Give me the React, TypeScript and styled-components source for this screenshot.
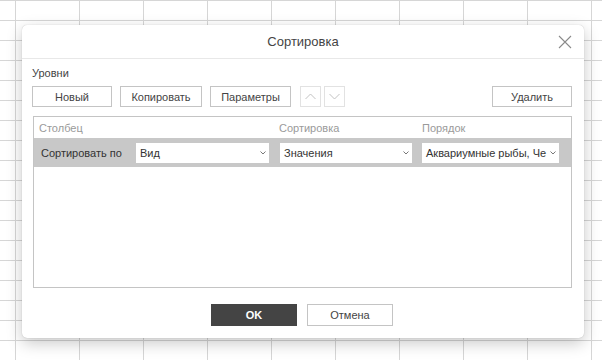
import { createGlobalStyle } from "styled-components";
import styled from "styled-components";

const GlobalStyle = createGlobalStyle`
  html, body {
    margin: 0;
    padding: 0;
  }
  body {
    font-family: "Liberation Sans", Arial, sans-serif;
    color: #444;
  }
`;

const Sheet = styled.div`
  position: relative;
  width: 602px;
  height: 360px;
  overflow: hidden;
  background-color: #fff;
  background-image: linear-gradient(to right, #d6d6d6 1px, transparent 1px),
    linear-gradient(to bottom, #d6d6d6 1px, transparent 1px);
  background-size: 64px 20px, 64px 20px;
  background-position: 15px 0, 0 0;
`;

const Dialog = styled.div`
  position: absolute;
  left: 22px;
  top: 25px;
  width: 562px;
  height: 313px;
  box-sizing: border-box;
  background: #fff;
  border-radius: 5px;
  box-shadow: 0 5px 16px rgba(0, 0, 0, 0.22), 0 0 1px rgba(0, 0, 0, 0.25);
  display: flex;
  flex-direction: column;
`;

const Header = styled.div`
  position: relative;
  height: 33px;
  border-bottom: 1px solid #e8e8e8;
  display: flex;
  align-items: center;
  justify-content: center;
  font-size: 13px;
  color: #444;
`;

const Close = styled.button`
  position: absolute;
  right: 12px;
  top: 10px;
  width: 14px;
  height: 14px;
  padding: 0;
  border: none;
  background: none;
  cursor: pointer;
  display: flex;
`;

const Body = styled.div`
  flex: 1;
  padding: 7px 12px 0 10px;
  display: flex;
  flex-direction: column;
`;

const Label = styled.div`
  font-size: 11px;
  line-height: 14px;
  height: 14px;
  color: #444;
`;

const Toolbar = styled.div`
  display: flex;
  align-items: center;
  margin-top: 6px;
  height: 21px;
`;

const Button = styled.button<{ w: number; gap?: number }>`
  width: ${({ w }) => w}px;
  height: 21px;
  margin-right: ${({ gap }) => gap ?? 0}px;
  box-sizing: border-box;
  border: 1px solid #c4c4c4;
  background: #fff;
  font-family: "Liberation Sans", Arial, sans-serif;
  font-size: 11px;
  color: #444;
  padding: 0;
  cursor: pointer;
`;

const ArrowButton = styled.button<{ gap?: number }>`
  width: 21px;
  height: 21px;
  margin-right: ${({ gap }) => gap ?? 0}px;
  box-sizing: border-box;
  border: 1px solid #e2e2e2;
  background: #fff;
  padding: 0;
  display: flex;
  align-items: center;
  justify-content: center;
`;

const Spacer = styled.div`
  flex: 1;
`;

const Table = styled.div`
  margin-top: 9px;
  margin-left: 1px;
  height: 172px;
  box-sizing: border-box;
  border: 1px solid #c4c4c4;
  display: flex;
  flex-direction: column;
`;

const HeadRow = styled.div`
  display: flex;
  height: 21px;
  align-items: center;
  padding-left: 5px;
  font-size: 11px;
  color: #9a9a9a;
`;

const HeadCell = styled.div<{ w?: number }>`
  width: ${({ w }) => (w ? `${w}px` : "auto")};
  flex-shrink: 0;
`;

const LevelRow = styled.div`
  display: flex;
  height: 29px;
  align-items: center;
  padding-left: 5px;
  background: #c8c8c8;
  font-size: 11px;
  color: #333;
`;

const RowLabel = styled.div`
  width: 95px;
  padding-left: 2px;
  flex-shrink: 0;
  font-size: 11px;
`;

const Select = styled.div<{ w: number; shift?: number }>`
  width: ${({ w }) => w}px;
  margin-left: ${({ shift }) => shift ?? 0}px;
  flex-shrink: 0;
  height: 20px;
  background: #fff;
  display: flex;
  align-items: center;
  padding: 0 3px 0 4px;
  box-sizing: border-box;
  overflow: hidden;
`;

const SelectText = styled.span`
  flex: 1;
  min-width: 0;
  white-space: nowrap;
  font-size: 11px;
  color: #333;
`;

const Caret = styled.svg`
  flex-shrink: 0;
  margin-left: 1px;
`;

const Footer = styled.div`
  display: flex;
  justify-content: center;
  gap: 10px;
  padding-top: 16px;
`;

const FooterButton = styled.button<{ primary?: boolean }>`
  width: 86px;
  height: 22px;
  box-sizing: border-box;
  border: 1px solid ${({ primary }) => (primary ? "#444" : "#c4c4c4")};
  background: ${({ primary }) => (primary ? "#444" : "#fff")};
  color: ${({ primary }) => (primary ? "#fff" : "#444")};
  font-family: "Liberation Sans", Arial, sans-serif;
  font-size: 11px;
  font-weight: ${({ primary }) => (primary ? 700 : 400)};
  padding: 0;
`;

function Chevron({ up }: { up?: boolean }) {
  return (
    <svg width="11" height="7" viewBox="0 0 11 7">
      <path
        d={up ? "M0.5 6 L5.5 1 L10.5 6" : "M0.5 1 L5.5 6 L10.5 1"}
        fill="none"
        stroke="#c2c2c2"
        strokeWidth="1"
      />
    </svg>
  );
}

function Dropdown({ value, w, shift }: { value: string; w: number; shift?: number }) {
  return (
    <Select w={w} shift={shift}>
      <SelectText>{value}</SelectText>
      <Caret width="6" height="4" viewBox="0 0 6 4">
        <path d="M0.5 0.5 L3 3 L5.5 0.5" fill="none" stroke="#777" strokeWidth="1" />
      </Caret>
    </Select>
  );
}

export default function App() {
  return (
    <>
      <GlobalStyle />
      <Sheet>
        <Dialog>
          <Header>
            Сортировка
            <Close aria-label="Закрыть">
              <svg width="14" height="14" viewBox="0 0 14 14">
                <path d="M1 1 L13 13 M13 1 L1 13" stroke="#8a8a8a" strokeWidth="1.1" />
              </svg>
            </Close>
          </Header>
          <Body>
            <Label>Уровни</Label>
            <Toolbar>
              <Button w={80} gap={8}>Новый</Button>
              <Button w={82} gap={8}>Копировать</Button>
              <Button w={81} gap={9}>Параметры</Button>
              <ArrowButton gap={3}>
                <Chevron up />
              </ArrowButton>
              <ArrowButton>
                <Chevron />
              </ArrowButton>
              <Spacer />
              <Button w={80}>Удалить</Button>
            </Toolbar>
            <Table>
              <HeadRow>
                <HeadCell w={240}>Столбец</HeadCell>
                <HeadCell w={143}>Сортировка</HeadCell>
                <HeadCell>Порядок</HeadCell>
              </HeadRow>
              <LevelRow>
                <RowLabel>Сортировать по</RowLabel>
                <Dropdown value="Вид" w={133} />
                <Dropdown value="Значения" w={132} shift={11} />
                <Dropdown value="Аквариумные рыбы, Че" w={137} shift={10} />
              </LevelRow>
            </Table>
            <Footer>
              <FooterButton primary>OK</FooterButton>
              <FooterButton>Отмена</FooterButton>
            </Footer>
          </Body>
        </Dialog>
      </Sheet>
    </>
  );
}
